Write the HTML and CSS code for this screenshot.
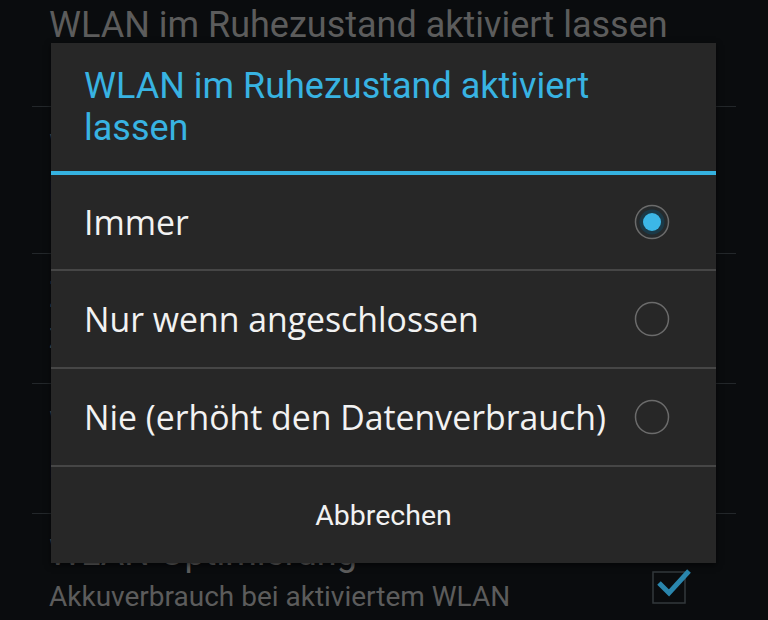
FILE: index.html
```html
<!DOCTYPE html>
<html lang="de">
<head>
  <meta charset="UTF-8">
  <meta name="viewport" content="width=device-width, initial-scale=1.0">
  <title>WLAN erweitert</title>
  <link rel="stylesheet" href="styles.css">
</head>
<body>
  <ul class="settings">
    <li class="pref first">
      <div class="pref-title">WLAN im Ruhezustand aktiviert lassen</div>
      <div class="pref-summary">Immer</div>
    </li>
    <li class="pref tall">
      <div class="pref-title">WLAN-Frequenzband</div>
      <div class="pref-summary">Frequenzbereich für den Betrieb angeben</div>
    </li>
    <li class="pref">
      <div class="pref-title">Zertifikate installieren</div>
      <div class="pref-summary">Zertifikate vom Speicher installieren</div>
    </li>
    <li class="pref">
      <div class="pref-title">Wi-Fi Direct</div>
      <div class="pref-summary">Direkte Verbindung</div>
    </li>
    <li class="pref with-check">
      <div class="pref-text">
        <div class="pref-title">WLAN-Optimierung</div>
        <div class="pref-summary">Akkuverbrauch bei aktiviertem WLAN minimieren</div>
      </div>
      <svg class="checkbox" width="40" height="40" viewBox="0 0 40 40">
        <rect x="1" y="6" width="32" height="31" fill="none" stroke="#33383c" stroke-width="1.5"/>
        <polyline points="7,17 17,27 37,5" fill="none" stroke="#2a86ad" stroke-width="5"/>
      </svg>
    </li>
  </ul>

  <div class="dialog">
    <div class="dialog-title">WLAN im Ruhezustand aktiviert lassen</div>
    <ul class="choices">
      <li class="choice">
        <span>Immer</span>
        <svg class="radio" width="36" height="36" viewBox="0 0 36 36">
          <circle cx="18" cy="18" r="16.5" fill="#262a2c" stroke="#6b6b6b" stroke-width="1.5"/>
          <circle cx="18" cy="18" r="12.5" fill="#1b3a48"/>
          <circle cx="18" cy="18" r="9" fill="#3cb7e7"/>
        </svg>
      </li>
      <li class="choice">
        <span>Nur wenn angeschlossen</span>
        <svg class="radio" width="36" height="36" viewBox="0 0 36 36">
          <circle cx="18" cy="18" r="16.5" fill="none" stroke="#6b6b6b" stroke-width="1.5"/>
        </svg>
      </li>
      <li class="choice">
        <span>Nie (erhöht den Datenverbrauch)</span>
        <svg class="radio" width="36" height="36" viewBox="0 0 36 36">
          <circle cx="18" cy="18" r="16.5" fill="none" stroke="#6b6b6b" stroke-width="1.5"/>
        </svg>
      </li>
    </ul>
    <div class="dialog-button">Abbrechen</div>
  </div>
</body>
</html>
```

FILE: styles.css
```css
body {
  margin: 0;
  padding: 0;
  width: 768px;
  height: 620px;
  overflow: hidden;
  position: relative;
  background-color: #0a0c0e;
  font-family: Roboto, "Noto Sans", sans-serif;
}

.settings {
  list-style: none;
  margin: 0;
  padding: 0 32px;
}

.pref {
  height: 130px;
  padding: 20px 17px 0;
  box-sizing: border-box;
  border-bottom: 1px solid #23272a;
  color: #5c5c5c;
  white-space: nowrap;
}

.pref.first {
  height: 107px;
  padding-top: 4px;
}

.pref.tall {
  height: 147px;
}

.pref.with-check {
  display: flex;
  align-items: flex-start;
  justify-content: space-between;
  border-bottom: none;
  padding-top: 18px;
  padding-right: 44px;
}

.pref-text {
  width: 560px;
  white-space: normal;
}

.pref-title {
  font-size: 36px;
  line-height: 42px;
}

.pref-summary {
  margin-top: 6px;
  font-size: 28px;
  line-height: 34px;
}

.checkbox {
  margin-top: 34px;
}

.dialog {
  position: absolute;
  left: 51px;
  top: 43px;
  width: 665px;
  height: 520px;
  background-color: #272727;
  box-shadow: 0 2px 6px rgba(0, 0, 0, 0.6);
  color: #f2f2f2;
}

.dialog-title {
  color: #38b3e2;
  font-size: 36px;
  line-height: 42px;
  padding: 22px 100px 22px 33px;
  border-bottom: 4px solid #35b2e0;
}

.choices {
  list-style: none;
  margin: 0;
  padding: 0;
}

.choice {
  height: 98px;
  box-sizing: border-box;
  display: flex;
  align-items: center;
  justify-content: space-between;
  padding: 0 46px 0 33px;
  border-bottom: 2px solid #464646;
  font-family: "Open Sans", Roboto, sans-serif;
  font-size: 33.8px;
}

.choice:first-child {
  height: 96px;
}

.dialog-button {
  height: 96px;
  display: flex;
  align-items: center;
  justify-content: center;
  font-size: 28.5px;
}
```
